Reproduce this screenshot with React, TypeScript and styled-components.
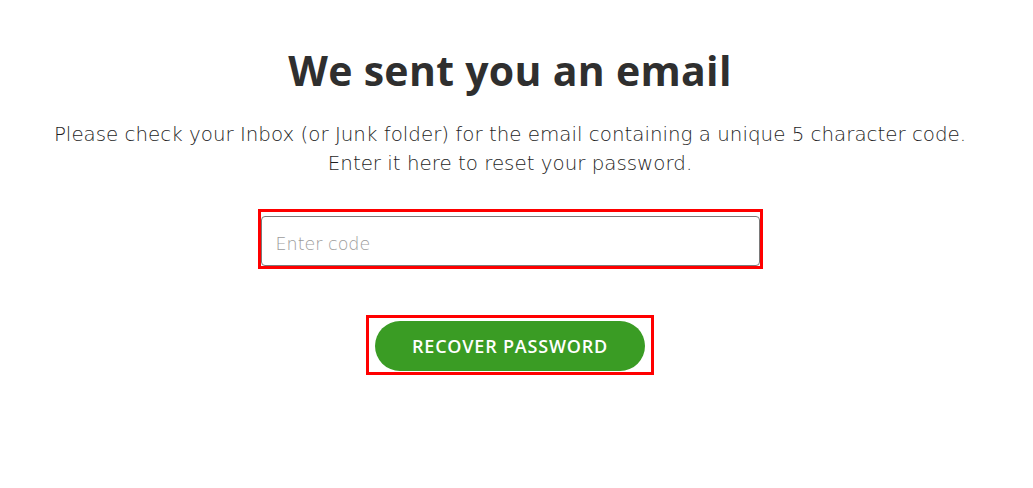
import styled, { createGlobalStyle } from "styled-components";

const GlobalStyle = createGlobalStyle`
  body {
    margin: 0;
    background: #ffffff;
    font-family: "Open Sans", "Liberation Sans", sans-serif;
  }
`;

const Page = styled.main`
  display: flex;
  flex-direction: column;
  align-items: center;
  width: 1020px;
  padding-top: 44px;
  color: #2f2f2f;
`;

const Title = styled.h1`
  margin: 0;
  font-size: 41px;
  font-weight: 700;
  line-height: 52px;
  letter-spacing: 0.3px;
`;

const Lead = styled.p`
  margin: 24px 0 0;
  font-family: "DejaVu Sans", "Open Sans", sans-serif;
  font-size: 19.85px;
  font-weight: 200;
  line-height: 29px;
  text-align: center;
  color: #1e1e1e;
`;

const Highlight = styled.div<{ $pad: string; $gap: number }>`
  display: flex;
  justify-content: center;
  margin-top: ${props => props.$gap}px;
  border: 3px solid #ff0000;
  padding: ${props => props.$pad};
`;

const CodeInput = styled.input`
  box-sizing: border-box;
  width: 499px;
  height: 50px;
  padding: 5px 14px 0;
  border: 1px solid #7a7a7a;
  border-radius: 4px;
  font-family: "DejaVu Sans", "Open Sans", sans-serif;
  font-size: 17.5px;
  font-weight: 200;
  color: #333;
  outline: none;

  &::placeholder {
    color: #9c9c9c;
  }
`;

const Button = styled.button`
  width: 270px;
  height: 50px;
  border: none;
  border-radius: 25px;
  background-color: #3a9c24;
  color: #ffffff;
  font-family: inherit;
  font-size: 18px;
  font-weight: 600;
  letter-spacing: 0.8px;
  cursor: pointer;
`;

function App() {
  return (
    <>
      <GlobalStyle />
      <Page>
        <Title>We sent you an email</Title>
        <Lead>
          Please check your Inbox (or Junk folder) for the email containing a unique 5 character code.
          <br />
          Enter it here to reset your password.
        </Lead>
        <Highlight $pad="4px 0 0" $gap={31}>
          <CodeInput placeholder="Enter code" />
        </Highlight>
        <Highlight $pad="3px 6px 1px" $gap={46}>
          <Button>RECOVER PASSWORD</Button>
        </Highlight>
      </Page>
    </>
  );
}

export default App;
